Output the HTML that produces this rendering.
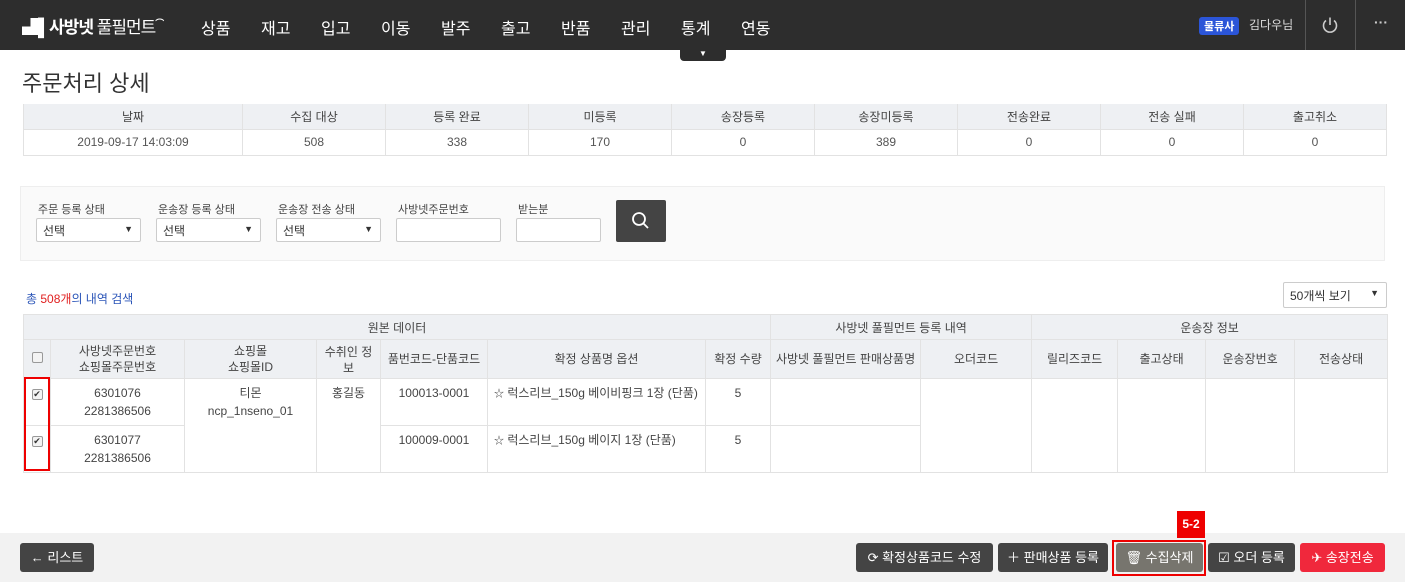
<!DOCTYPE html>
<html><head><meta charset="utf-8"><style>
*{box-sizing:border-box;margin:0;padding:0}
body{width:1405px;height:582px;overflow:hidden;background:#fff;font-family:"Liberation Sans","Noto Sans CJK KR",sans-serif;color:#444;font-size:12px;position:relative}
.nav{position:absolute;left:0;top:0;width:1405px;height:50px;background:#2d2d2d}
.logo{position:absolute;left:22px;top:13px;color:#fff;font-size:17px;font-weight:bold;letter-spacing:-1px}
.menu{position:absolute;top:15px;color:#fff;font-size:16px}
.tab{position:absolute;left:680px;top:50px;width:46px;height:11px;background:#2d2d2d;border-radius:0 0 4px 4px;color:#fff;font-size:8px;text-align:center;line-height:8px}
.badge{position:absolute;left:1199px;top:17px;background:#2b55d8;color:#fff;font-size:11px;font-weight:bold;padding:1px 5px;border-radius:3px}
.user{position:absolute;left:1249px;top:16px;color:#ddd;font-size:12px}
.vl{position:absolute;top:0;width:1px;height:50px;background:#555}
h1{position:absolute;left:22px;top:66px;font-size:22px;font-weight:normal;color:#333}
table{border-collapse:collapse;table-layout:fixed;position:absolute}
td,th{border:1px solid #e2e2e2;text-align:center;font-weight:normal;font-size:12px;color:#444}
th{background:#eef0f3}
.sum{left:23px;top:104px;width:1364px}
.sum th{height:25px;border-top:none}
.sum td{height:26px;color:#555}
.sbox{position:absolute;left:20px;top:186px;width:1365px;height:75px;background:#fafafa;border:1px solid #eee}
.lbl{position:absolute;top:201px;font-size:11px;color:#444}
.sel{position:absolute;top:218px;height:24px;background:#fff;border:1px solid #ccc;border-radius:2px;font-size:12px;padding:3px 6px;color:#333}
.sel span{position:absolute;right:7px;top:5px;font-size:9px}
.sbtn{position:absolute;left:616px;top:200px;width:50px;height:42px;background:#444;border-radius:2px}
.cnt{position:absolute;left:26px;top:290px;font-size:12px;color:#2b55b8}
.main{left:23px;top:314px;width:1364px}
.main th{height:25px}
.main tr.h2 th{height:39px;line-height:16px}
.main tr.d td{height:47px;vertical-align:top;padding-top:5px;line-height:18px}
.cb{display:inline-block;width:11px;height:11px;border:1px solid #999;border-radius:2px;background:#f3f3f3;font-size:9px;line-height:9px;color:#333}
.redbox{position:absolute;border:2px solid #e00}
.bbar{position:absolute;left:0;top:533px;width:1405px;height:49px;background:#f2f2f2}
.btn{position:absolute;top:543px;height:29px;background:#444;color:#fff;border-radius:3px;font-size:13px;line-height:29px;text-align:center}
</style></head><body>
<div class="nav"></div>
<div class="logo">▟▌사방넷 <span style="font-weight:normal">풀필먼트</span><sup style="font-size:9px">⌒</sup></div>
<div class="menu" style="left:201px">상품</div><div class="menu" style="left:261px">재고</div><div class="menu" style="left:321px">입고</div><div class="menu" style="left:381px">이동</div><div class="menu" style="left:441px">발주</div><div class="menu" style="left:501px">출고</div><div class="menu" style="left:561px">반품</div><div class="menu" style="left:621px">관리</div><div class="menu" style="left:681px">통계</div><div class="menu" style="left:741px">연동</div>
<div class="tab">▼</div>
<div class="badge">물류사</div><div class="user">김다우님</div>
<div class="vl" style="left:1305px"></div><div class="vl" style="left:1355px"></div>
<svg style="position:absolute;left:1321px;top:16px" width="18" height="18" viewBox="0 0 18 18"><path d="M5 4.5A6.5 6.5 0 1 0 13 4.5M9 1.5V9" fill="none" stroke="#ccc" stroke-width="1.6"/></svg>
<div style="position:absolute;left:1374px;top:14px;color:#ccc;font-size:14px;font-weight:bold">···</div>

<h1>주문처리 상세</h1>
<table class="sum"><colgroup><col style="width:219px"><col span="8" style="width:143px"></colgroup>
<tr><th>날짜</th><th>수집 대상</th><th>등록 완료</th><th>미등록</th><th>송장등록</th><th>송장미등록</th><th>전송완료</th><th>전송 실패</th><th>출고취소</th></tr>
<tr><td>2019-09-17 14:03:09</td><td>508</td><td>338</td><td>170</td><td>0</td><td>389</td><td>0</td><td>0</td><td>0</td></tr></table>

<div class="sbox"></div>
<div class="lbl" style="left:38px">주문 등록 상태</div><div class="lbl" style="left:158px">운송장 등록 상태</div><div class="lbl" style="left:278px">운송장 전송 상태</div><div class="lbl" style="left:398px">사방넷주문번호</div><div class="lbl" style="left:518px">받는분</div>
<div class="sel" style="left:36px;width:105px">선택<span>▼</span></div>
<div class="sel" style="left:156px;width:105px">선택<span>▼</span></div>
<div class="sel" style="left:276px;width:105px">선택<span>▼</span></div>
<div class="sel" style="left:396px;width:105px"></div>
<div class="sel" style="left:516px;width:85px"></div>
<div class="sbtn"><svg style="position:absolute;left:15px;top:11px" width="20" height="20" viewBox="0 0 20 20"><circle cx="8" cy="8" r="6" fill="none" stroke="#fff" stroke-width="1.8"/><path d="M12.5 12.5L17 17" stroke="#fff" stroke-width="1.8"/></svg></div>

<div class="cnt">총 <span style="color:#e02020">508개</span>의 내역 검색</div>
<div class="sel" style="left:1283px;top:282px;width:104px;height:26px;font-size:12px;padding:4px 6px">50개씩 보기<span>▼</span></div>

<table class="main"><colgroup><col style="width:27px"><col style="width:134px"><col style="width:132px"><col style="width:64px"><col style="width:107px"><col style="width:218px"><col style="width:65px"><col style="width:150px"><col style="width:111px"><col style="width:86px"><col style="width:88px"><col style="width:89px"><col style="width:93px"></colgroup>
<tr><th colspan="7">원본 데이터</th><th colspan="2">사방넷 풀필먼트 등록 내역</th><th colspan="4">운송장 정보</th></tr>
<tr class="h2"><th><span class="cb"></span></th><th>사방넷주문번호<br>쇼핑몰주문번호</th><th>쇼핑몰<br>쇼핑몰ID</th><th style="vertical-align:top;padding-top:4px">수취인 정<br>보</th><th>품번코드-단품코드</th><th>확정 상품명 옵션</th><th>확정 수량</th><th>사방넷 풀필먼트 판매상품명</th><th>오더코드</th><th>릴리즈코드</th><th>출고상태</th><th>운송장번호</th><th>전송상태</th></tr>
<tr class="d"><td style="padding-top:5px"><span class="cb">✔</span></td><td>6301076<br>2281386506</td><td rowspan="2">티몬<br>ncp_1nseno_01</td><td rowspan="2">홍길동</td><td>100013-0001</td><td style="text-align:left;padding-left:6px"><span style="font-size:10px">☆</span> 럭스리브_150g 베이비핑크 1장 (단품)</td><td>5</td><td></td><td rowspan="2"></td><td rowspan="2"></td><td rowspan="2"></td><td rowspan="2"></td><td rowspan="2"></td></tr>
<tr class="d"><td style="padding-top:5px"><span class="cb">✔</span></td><td>6301077<br>2281386506</td><td>100009-0001</td><td style="text-align:left;padding-left:6px"><span style="font-size:10px">☆</span> 럭스리브_150g 베이지 1장 (단품)</td><td>5</td><td></td></tr>
</table>
<div class="redbox" style="left:24px;top:377px;width:26px;height:94px"></div>

<div class="bbar"></div>
<div class="btn" style="left:20px;width:74px">← 리스트</div>
<div class="btn" style="left:856px;width:137px">⟳ 확정상품코드 수정</div>
<div class="btn" style="left:998px;width:110px">＋ 판매상품 등록</div>
<div class="btn" style="left:1116px;width:87px;background:#77756e">🗑 수집삭제</div>
<div class="btn" style="left:1208px;width:87px">☑ 오더 등록</div>
<div class="btn" style="left:1300px;width:85px;background:#f0283c">✈ 송장전송</div>
<div class="redbox" style="left:1112px;top:540px;width:94px;height:36px"></div>
<div style="position:absolute;left:1177px;top:511px;width:28px;height:27px;background:#e00;color:#fff;font-weight:bold;font-size:12px;text-align:center;line-height:27px">5-2</div>
</body></html>
